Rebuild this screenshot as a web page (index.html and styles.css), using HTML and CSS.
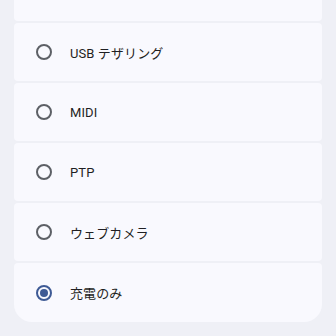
FILE: index.html
```html
<!DOCTYPE html>
<html lang="ja">
  <head>
    <meta charset="UTF-8" />
    <meta name="viewport" content="width=device-width, initial-scale=1.0" />
    <title>USB の設定</title>
    <link rel="stylesheet" href="styles.css">
  </head>
  <body>
    <div class="option-list">
      <div class="option-card option-top"></div>

      <label class="option-card">
        <span class="radio"></span>
        <span class="option-label">USB テザリング</span>
      </label>

      <label class="option-card">
        <span class="radio"></span>
        <span class="option-label">MIDI</span>
      </label>

      <label class="option-card">
        <span class="radio"></span>
        <span class="option-label">PTP</span>
      </label>

      <label class="option-card">
        <span class="radio"></span>
        <span class="option-label">ウェブカメラ</span>
      </label>

      <label class="option-card option-bottom">
        <span class="radio radio-checked"></span>
        <span class="option-label">充電のみ</span>
      </label>
    </div>
  </body>
</html>
```

FILE: styles.css
```css
* {
  margin: 0;
  padding: 0;
  box-sizing: border-box;
}

body {
  font-family: Roboto, "Noto Sans CJK JP", sans-serif;
  background: #eff0f6;
  color: #1f1f23;
  overflow: hidden;
  height: 100vh;
  padding: 0 14px;
}

.option-list {
  display: flex;
  flex-direction: column;
  gap: 2px;
}

.option-card {
  display: flex;
  align-items: center;
  height: 58px;
  padding: 0 21px;
  gap: 18px;
  background: #f9f9fe;
  border-radius: 4px;
}

/* top card is cut off by the window */
.option-top {
  height: 21px;
  border-radius: 0 0 4px 4px;
}

.option-bottom {
  height: 59px;
  border-radius: 4px 4px 18px 18px;
}

.radio {
  flex: none;
  width: 16px;
  height: 16px;
  margin-left: 1px;
  border: 2px solid #5d6066;
  border-radius: 50%;
  display: flex;
  align-items: center;
  justify-content: center;
}

.radio-checked {
  border-color: #3e5a95;
}

.radio-checked::after {
  content: "";
  width: 8px;
  height: 8px;
  border-radius: 50%;
  background: #3e5a95;
}

.option-label {
  font-size: 13px;
  letter-spacing: 0.1px;
}
```
